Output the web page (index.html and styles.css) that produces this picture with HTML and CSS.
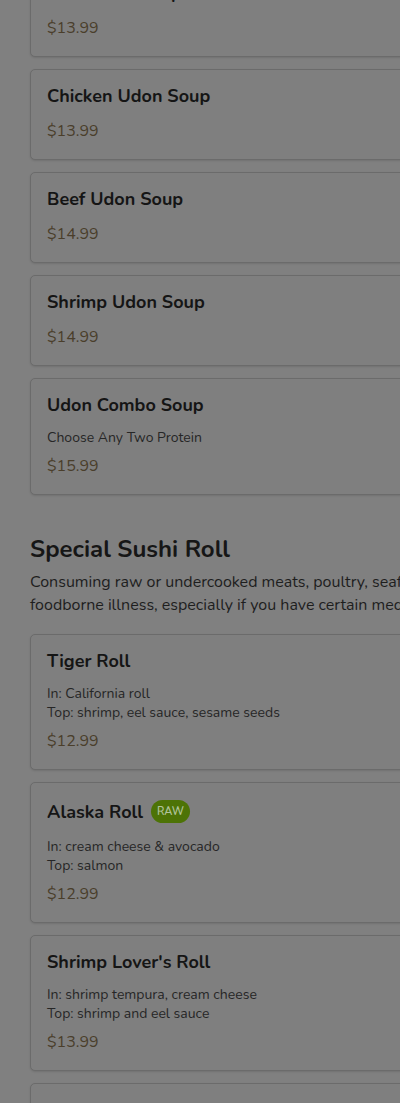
FILE: index.html
```html
<!DOCTYPE html>
<html lang="en">
<head>
<meta charset="utf-8">
<title>Menu</title>
<link rel="stylesheet" href="styles.css">
</head>
<body>
<main class="menu">
  <section class="section section-udon">
    <div class="items">
      <article class="card">
        <div class="title-row"><h3 class="name">Tofu Udon Soup</h3></div>
        <p class="price">$13.99</p>
      </article>
      <article class="card">
        <div class="title-row"><h3 class="name">Chicken Udon Soup</h3></div>
        <p class="price">$13.99</p>
      </article>
      <article class="card">
        <div class="title-row"><h3 class="name">Beef Udon Soup</h3></div>
        <p class="price">$14.99</p>
      </article>
      <article class="card">
        <div class="title-row"><h3 class="name">Shrimp Udon Soup</h3></div>
        <p class="price">$14.99</p>
      </article>
      <article class="card">
        <div class="title-row"><h3 class="name">Udon Combo Soup</h3></div>
        <p class="desc">Choose Any Two Protein</p>
        <p class="price">$15.99</p>
      </article>
    </div>
  </section>

  <section class="section">
    <h2 class="section-title">Special Sushi Roll</h2>
    <p class="section-note">Consuming raw or undercooked meats, poultry, seafood, shellfish, or eggs may increase your risk of foodborne illness, especially if you have certain medical conditions.</p>
    <div class="items">
      <article class="card">
        <div class="title-row"><h3 class="name">Tiger Roll</h3></div>
        <p class="desc">In: California roll<br>Top: shrimp, eel sauce, sesame seeds</p>
        <p class="price">$12.99</p>
      </article>
      <article class="card">
        <div class="title-row"><h3 class="name">Alaska Roll</h3><span class="badge">RAW</span></div>
        <p class="desc">In: cream cheese &amp; avocado<br>Top: salmon</p>
        <p class="price">$12.99</p>
      </article>
      <article class="card">
        <div class="title-row"><h3 class="name">Shrimp Lover's Roll</h3></div>
        <p class="desc">In: shrimp tempura, cream cheese<br>Top: shrimp and eel sauce</p>
        <p class="price">$13.99</p>
      </article>
      <article class="card">
        <div class="title-row"><h3 class="name">Rainbow Roll</h3></div>
        <p class="desc">In: California roll<br>Top: assorted fish</p>
        <p class="price">$13.99</p>
      </article>
    </div>
  </section>
</main>
</body>
</html>
```

FILE: styles.css
```css
html, body {
  margin: 0;
  padding: 0;
}

body {
  background: #808080;
  font-family: "Nunito", "Lato", "Noto Sans", sans-serif;
  color: #161616;
  overflow: hidden;
  height: 1103px;
}

.menu {
  width: 760px;
  padding: 0 30px;
  margin-top: -34px;
}

.section {
  display: flex;
  flex-direction: column;
}

.section-udon {
  margin-bottom: 38px;
}

.items {
  display: flex;
  flex-direction: column;
  gap: 12px;
}

.card {
  border: 1px solid #6b6b6b;
  border-radius: 5px;
  padding: 14px 16px 16px;
  background: #7f7f7f;
  box-shadow: 0 1px 2px rgba(0, 0, 0, 0.12);
}

.title-row {
  display: flex;
  align-items: center;
  gap: 8px;
  min-height: 24px;
  margin-bottom: 11px;
}

.name {
  margin: 0;
  font-size: 18px;
  line-height: 24px;
  font-weight: 700;
  color: #151515;
}

.badge {
  display: inline-flex;
  align-items: center;
  height: 23px;
  margin: 3px 0;
  padding: 0 6px;
  border-radius: 12px;
  background: #4d7306;
  color: #b1c49c;
  font-size: 11px;
  font-weight: 600;
}

.desc {
  margin: 0 0 7px;
  font-size: 14px;
  line-height: 19px;
  color: #262626;
}

.price {
  margin: 0;
  font-size: 16px;
  line-height: 24px;
  color: #4a3e2b;
}

.section-title {
  margin: 0 0 6px;
  font-size: 24px;
  line-height: 32px;
  font-weight: 700;
  color: #161616;
}

.section-note {
  margin: 0 0 17px;
  font-size: 16px;
  line-height: 23px;
  color: #1e1e1e;
}
```
